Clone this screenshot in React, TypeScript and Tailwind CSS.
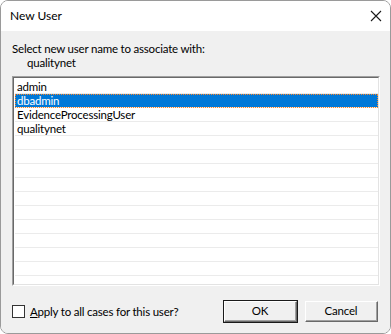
const users = ["admin", "dbadmin", "EvidenceProcessingUser", "qualitynet"];
const selected = "dbadmin";

const CloseIcon = () => (
  <svg width="12" height="12" viewBox="0 0 12 12" className="block">
    <path d="M1 1 L11 11 M11 1 L1 11" stroke="#1a1a1a" strokeWidth="1.1" fill="none" />
  </svg>
);

const UserRow = ({ name }: { name: string }) => {
  const isSel = name === selected;
  return (
    <div
      className={
        isSel
          ? "h-[14px] border-b border-[#ebebeb] bg-[#0078d7] text-white pl-[2px] leading-[13px] outline outline-1 outline-dotted outline-[#ff8728] -outline-offset-1"
          : "h-[14px] border-b border-[#ebebeb] text-black pl-[2px] leading-[13px]"
      }
    >
      {name}
    </div>
  );
};

const WinButton = ({ label, isDefault }: { label: string; isDefault?: boolean }) => (
  <button
    className={
      isDefault
        ? "w-[75px] h-[23px] border border-[#1a1a1a] bg-[#f0f0f0]"
        : "w-[75px] h-[23px] border border-[#f0f0f0] bg-[#f0f0f0]"
    }
  >
    <div className="w-full h-full border-t border-l border-r border-b border-t-white border-l-white border-r-[#696969] border-b-[#696969]">
      <div className="w-full h-full border-r border-b border-r-[#a0a0a0] border-b-[#a0a0a0] flex items-center justify-center text-black">
        {label}
      </div>
    </div>
  </button>
);

export default function App() {
  return (
    <div className="w-[391px] h-[334px] bg-white font-['Lato',sans-serif] text-[11.5px] tracking-[-0.2px]">
      <div className="w-full h-full flex flex-col border border-[#9a9a9a] rounded-[8px] overflow-hidden">
        <div className="h-[30px] shrink-0 bg-white flex items-center justify-between pl-[9px] pr-[8px]">
          <span className="text-black text-[12px] tracking-normal">New User</span>
          <CloseIcon />
        </div>
        <div className="flex-1 bg-[#f0f0f0] flex flex-col pl-[11px] pr-[10px] pt-[11px]">
          <p className="leading-[14px] text-black">Select new user name to associate with:</p>
          <p className="leading-[14px] text-black pl-[15px]">qualitynet</p>
          <div className="mt-[6px] h-[210px] border-t border-l border-b border-r border-t-[#a0a0a0] border-l-[#a0a0a0] border-b-white border-r-white">
            <div className="w-full h-full border-t border-l border-b border-r border-t-[#696969] border-l-[#696969] border-b-[#e3e3e3] border-r-[#e3e3e3] bg-white pt-[2px] pl-[1px] overflow-hidden">
              {users.map((u) => (
                <UserRow key={u} name={u} />
              ))}
              {Array.from({ length: 11 }).map((_, i) => (
                <div key={i} className="h-[14px] border-b border-[#ebebeb]" />
              ))}
            </div>
          </div>
          <div className="mt-[14px] flex items-center justify-between pr-[1px]">
            <label className="flex items-center gap-[5px] text-black">
              <span className="w-[13px] h-[13px] border border-[#333333] bg-white" />
              <span>
                <span className="underline">A</span>pply to all cases for this user?
              </span>
            </label>
            <div className="flex gap-[6px]">
              <WinButton label="OK" isDefault />
              <WinButton label="Cancel" />
            </div>
          </div>
        </div>
      </div>
    </div>
  );
}
